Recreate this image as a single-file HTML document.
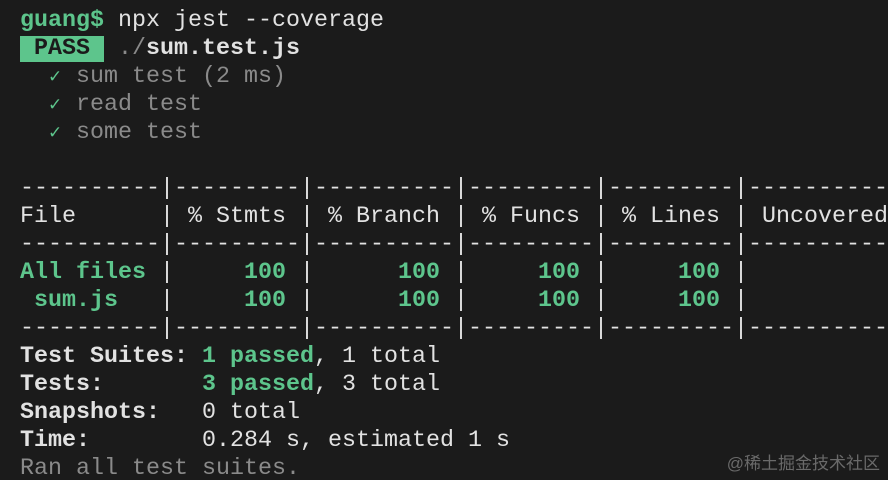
<!DOCTYPE html>
<html><head><meta charset="utf-8"><style>
html,body{margin:0;padding:0;background:#1b1b1b;width:888px;height:480px;overflow:hidden;position:relative}
.t{position:absolute;left:20px;top:7px;width:868px;overflow:hidden;font-family:"Liberation Mono",monospace;font-size:23.33px;color:#e2e2e2}
.t div{height:28px;line-height:28px;white-space:pre;overflow:visible}
.g{color:#5dc58c;font-weight:bold}
.gr{color:#8a8a8a}
.ck{color:#5dc58c;display:inline-block;width:14px;font-size:17px;line-height:10px;text-align:center;vertical-align:baseline}
.b{font-weight:bold}
.pass{background:#5dc58c;color:#1b1b1b;font-weight:bold}
.wm{position:absolute;right:8px;bottom:6px;font-family:"Liberation Sans","Noto Sans CJK SC",sans-serif;font-size:17px;color:#6a6a6a}
</style></head><body>
<div class="t">
<div><span class="g">guang$</span> npx jest --coverage</div>
<div><span class="pass"> PASS </span> <span class="gr">./</span><span class="b">sum.test.js</span></div>
<div>  <span class="ck">✓</span> <span class="gr">sum test (2 ms)</span></div>
<div>  <span class="ck">✓</span> <span class="gr">read test</span></div>
<div>  <span class="ck">✓</span> <span class="gr">some test</span></div>
<div> </div>
<div>----------|---------|----------|---------|---------|-------------------</div>
<div>File      | % Stmts | % Branch | % Funcs | % Lines | Uncovered Line #s</div>
<div>----------|---------|----------|---------|---------|-------------------</div>
<div><span class="g">All files</span> | <span class="g">    100</span> | <span class="g">     100</span> | <span class="g">    100</span> | <span class="g">    100</span> |</div>
<div> <span class="g">sum.js</span>   | <span class="g">    100</span> | <span class="g">     100</span> | <span class="g">    100</span> | <span class="g">    100</span> |</div>
<div>----------|---------|----------|---------|---------|-------------------</div>
<div><span class="b">Test Suites:</span> <span class="g">1 passed</span>, 1 total</div>
<div><span class="b">Tests:</span>       <span class="g">3 passed</span>, 3 total</div>
<div><span class="b">Snapshots:</span>   0 total</div>
<div><span class="b">Time:</span>        0.284 s, estimated 1 s</div>
<div><span class="gr">Ran all test suites.</span></div>
</div>
<div class="wm">@稀土掘金技术社区</div>
</body></html>
